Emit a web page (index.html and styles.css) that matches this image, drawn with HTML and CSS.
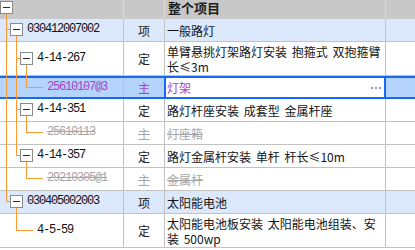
FILE: index.html
```html
<!DOCTYPE html>
<html lang="zh">
<head>
<meta charset="utf-8">
<title>整个项目</title>
<link rel="stylesheet" href="styles.css">
</head>
<body>
<div class="grid">
  <svg class="guides" width="123" height="248" viewBox="0 0 123 248" aria-hidden="true">
    <g fill="#ff9a33">
      <rect x="6" y="14" width="1" height="188"/>
      <rect x="16" y="36" width="1" height="120"/>
      <rect x="26" y="65" width="1" height="23"/>
      <rect x="26" y="116" width="1" height="17"/>
      <rect x="26" y="162" width="1" height="17"/>
      <rect x="16" y="208" width="1" height="23"/>
      <rect x="6" y="29" width="5" height="1"/>
      <rect x="16" y="58" width="5" height="1"/>
      <rect x="26" y="87" width="17" height="1"/>
      <rect x="16" y="109" width="5" height="1"/>
      <rect x="26" y="132" width="17" height="1"/>
      <rect x="16" y="155" width="5" height="1"/>
      <rect x="26" y="178" width="17" height="1"/>
      <rect x="6" y="201" width="5" height="1"/>
      <rect x="16" y="230" width="17" height="1"/>
    </g>
  </svg>

  <div class="row head">
    <div class="c tree"><span class="tg"></span></div>
    <div class="c type"></div>
    <div class="c desc"><span class="title">整个项目</span></div>
    <div class="c end"></div>
  </div>

  <div class="row grp">
    <div class="c tree l1"><span class="tg"></span><span class="code">030412007002</span></div>
    <div class="c type">项</div>
    <div class="c desc"><span class="txt">一般路灯</span></div>
    <div class="c end"></div>
  </div>

  <div class="row tall">
    <div class="c tree l2"><span class="tg"></span><span class="code">4-14-267</span></div>
    <div class="c type">定</div>
    <div class="c desc"><span class="txt">单臂悬挑灯架路灯安装 抱箍式 双抱箍臂长≤3m</span></div>
    <div class="c end"></div>
  </div>

  <div class="row sel">
    <div class="c tree leaf3"><span class="code main">25610107@3</span></div>
    <div class="c type main">主</div>
    <div class="c desc"><span class="txt main">灯架</span>
      <svg class="more" width="10" height="2" viewBox="0 0 10 2" aria-hidden="true"><g fill="#76a2d8"><rect x="0" y="0" width="2" height="2"/><rect x="4" y="0" width="2" height="2"/><rect x="8" y="0" width="2" height="2"/></g></svg>
    </div>
    <div class="c end"></div>
  </div>

  <div class="row">
    <div class="c tree l2"><span class="tg"></span><span class="code">4-14-351</span></div>
    <div class="c type">定</div>
    <div class="c desc"><span class="txt">路灯杆座安装 成套型 金属杆座</span></div>
    <div class="c end"></div>
  </div>

  <div class="row off">
    <div class="c tree leaf3"><span class="code">25610113</span></div>
    <div class="c type"><span>主</span></div>
    <div class="c desc"><span class="txt">灯座箱</span></div>
    <div class="c end"></div>
  </div>

  <div class="row">
    <div class="c tree l2"><span class="tg"></span><span class="code">4-14-357</span></div>
    <div class="c type">定</div>
    <div class="c desc"><span class="txt">路灯金属杆安装 单杆 杆长≤10m</span></div>
    <div class="c end"></div>
  </div>

  <div class="row off">
    <div class="c tree leaf3"><span class="code">29210305@1</span></div>
    <div class="c type"><span>主</span></div>
    <div class="c desc"><span class="txt">金属杆</span></div>
    <div class="c end"></div>
  </div>

  <div class="row grp">
    <div class="c tree l1"><span class="tg"></span><span class="code">030405002003</span></div>
    <div class="c type">项</div>
    <div class="c desc"><span class="txt">太阳能电池</span></div>
    <div class="c end"></div>
  </div>

  <div class="row tall">
    <div class="c tree leaf2"><span class="code">4-5-59</span></div>
    <div class="c type">定</div>
    <div class="c desc"><span class="txt">太阳能电池板安装 太阳能电池组装、安装 500wp</span></div>
    <div class="c end"></div>
  </div>
</div>
</body>
</html>
```

FILE: styles.css
```css
html, body {
  margin: 0;
  padding: 0;
  background: #ffffff;
}

body {
  font-family: "Noto Sans CJK SC", "Noto Sans", sans-serif;
  font-size: 12px;
  color: #1a1a1a;
}

.grid {
  position: relative;
  width: 415px;
}

.guides {
  position: absolute;
  left: 0;
  top: 0;
  z-index: 1;
  pointer-events: none;
}

.row {
  display: grid;
  grid-template-columns: 124px 41px 221px 1fr;
  height: 23px;
  box-sizing: border-box;
  border-bottom: 1px solid #c2c2c2;
}

.row.tall {
  height: 34px;
}

.c {
  display: flex;
  align-items: center;
  min-width: 0;
  overflow: hidden;
  box-sizing: border-box;
  border-right: 1px solid #c2c2c2;
}

.c.end {
  border-right: 0;
}

/* header */
.row.head {
  height: 19px;
  border-bottom: 0;
  background: #c8c8c8;
}

.row.head .c {
  align-items: flex-start;
  overflow: visible;
  border-right-color: #dadada;
}

.row.head .tree {
  padding-top: 1px;
  padding-left: 0;
}

.title {
  font-size: 13px;
  line-height: 15px;
  font-weight: bold;
  color: #1e1e1e;
  padding-left: 1px;
}

/* group rows */
.row.grp {
  background: #dce8fc;
}

/* tree column */
.tree {
  align-items: flex-start;
  padding-top: 4px;
}

.row.tall .tree {
  padding-top: 10px;
}

.tree.l1 { padding-left: 10px; }
.tree.l2 { padding-left: 20px; }
.tree.leaf3 { padding-left: 47px; }
.tree.leaf2 { padding-left: 37px; }

.tg {
  position: relative;
  z-index: 2;
  flex: none;
  width: 13px;
  height: 13px;
  box-sizing: border-box;
  border: 1px solid #8a8a8a;
  background: #ffffff;
  margin-right: 4px;
}

.tg::before {
  content: "";
  position: absolute;
  left: 2px;
  top: 5px;
  width: 7px;
  height: 1px;
  background: #2a2a2a;
}

.code {
  font-family: "Liberation Mono", "DejaVu Sans Mono", monospace;
  font-size: 12px;
  line-height: 13px;
  letter-spacing: -1.2px;
  white-space: nowrap;
  color: #111111;
}

/* type column */
.type {
  justify-content: center;
  color: #222222;
  line-height: 15px;
}

/* description column */
.desc {
  padding-left: 2px;
}

.txt {
  line-height: 15px;
  word-spacing: 2px;
  color: #141414;
}

/* selected row */
.row.sel {
  border-top: 2px solid #1669f2;
  border-bottom: 2px solid #1669f2;
}

.row.sel .tree {
  padding-top: 3px;
  background: #b4d4fc;
}

.row.sel .type,
.row.sel .end {
  background: #b4d4fc;
}

.row.sel .type {
  border-right-color: #1669f2;
}

.row.sel .desc {
  background: #ffffff;
  border-right-color: #1669f2;
  box-shadow: inset 1px 0 0 #1669f2, inset -1px 0 0 #1669f2;
}

.main,
.row.sel .code.main,
.row.sel .txt.main {
  color: #a640c8;
}

.more {
  margin-left: auto;
  margin-right: 4px;
  flex: none;
}

/* struck-out rows */
.row.off .code,
.row.off .type span,
.row.off .txt {
  color: #a6a6a6;
  text-decoration: line-through;
}
```
